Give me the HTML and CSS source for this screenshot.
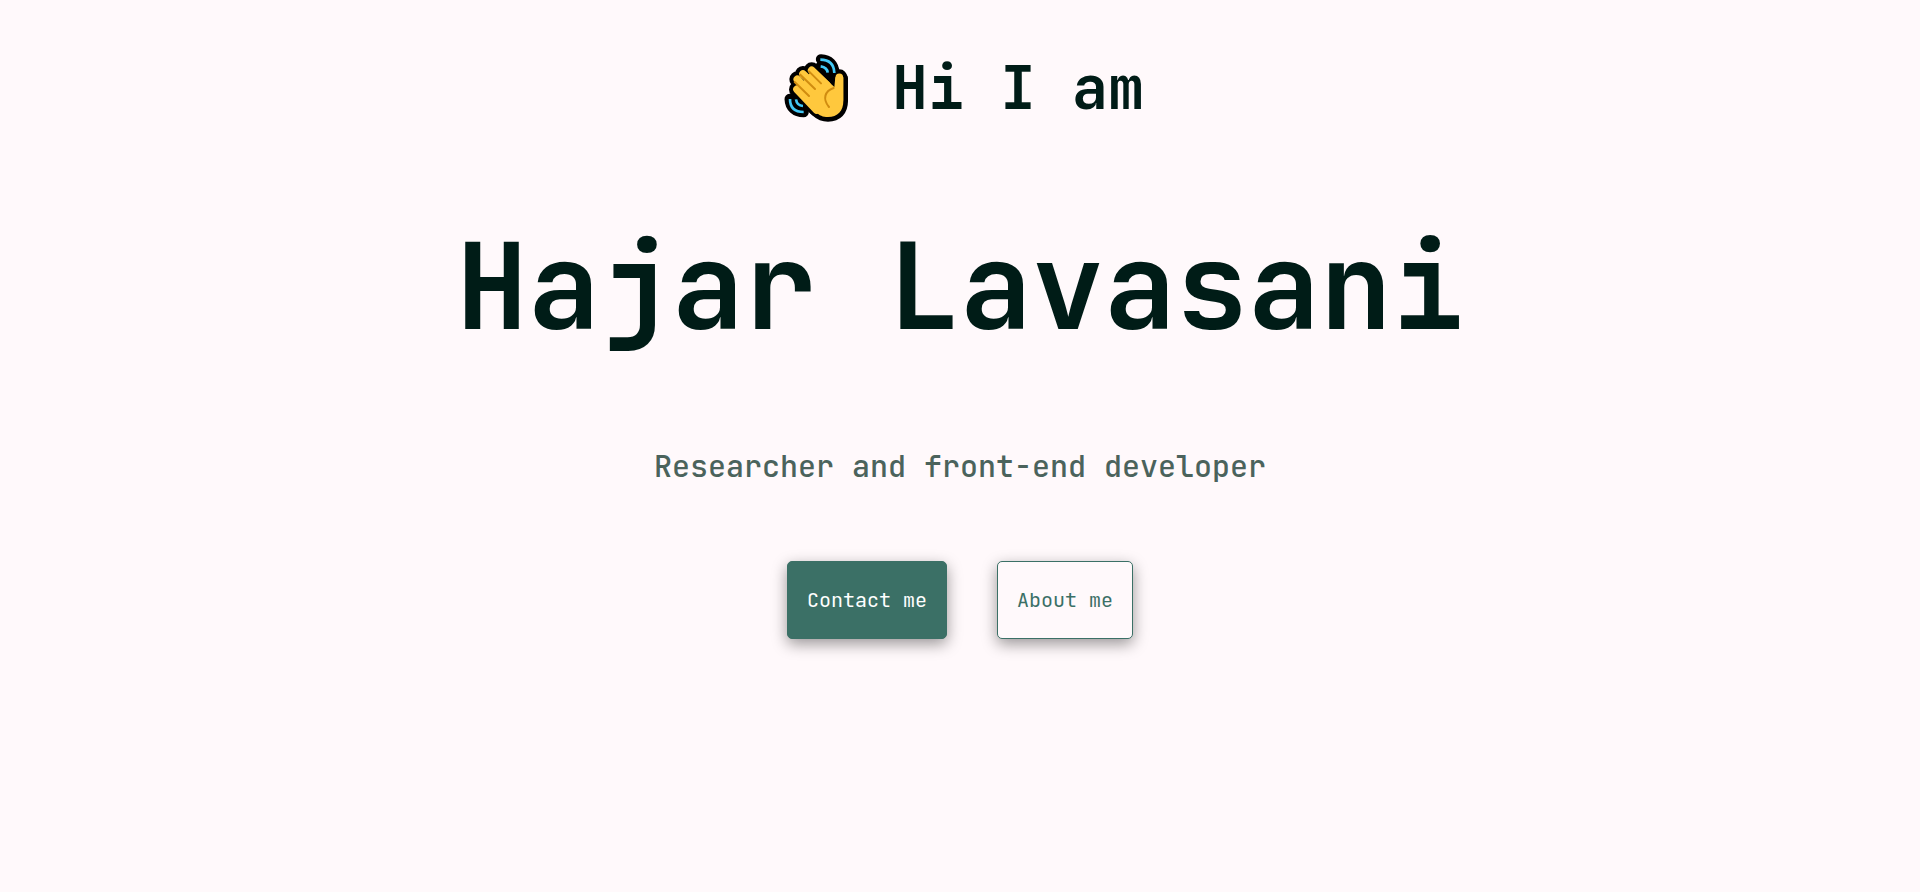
FILE: index.html
```html
<!DOCTYPE html>
<html lang="en">
<head>
<meta charset="utf-8">
<meta name="viewport" content="width=device-width, initial-scale=1">
<title>Hajar Lavasani</title>
<link rel="stylesheet" href="styles.css">
</head>
<body>
<main class="hero">
  <p class="greeting">
    <svg class="wave" viewBox="18 24 240 240" role="img" aria-label="Waving hand">
      <g fill="none" stroke="#000" stroke-linecap="round" stroke-linejoin="round">
        <path stroke-width="31" d="M153 58C177 59 192 74 193 98M59 177C60 202 76 216 101 216"/>
        <path stroke-width="30" d="M152 78L178 104M79 178L98 198"/>
        <path stroke-width="48" d="M125 91L165 131M99 102L150 150M82 118L130 170M81 148L140 206M208 112V185"/>
        <path stroke-width="28" fill="#000" d="M165 124L193 140L220 114V183C220 213 203 231 174 231C158 231 149 227 137 216L90 167Z"/>
      </g>
      <path fill="none" stroke="#42c8f5" stroke-width="8" d="M151 59C178 59 192 73 193 99M152 79C166 81 172 86 173 98M60 177C60 204 75 216 101 216M78 178C80 191 86 197 99 198"/>
      <g stroke="#ffc83d" stroke-linecap="round" stroke-linejoin="round" fill="none">
        <path stroke-width="23" d="M125 91L170 134M99 102L150 150M82 118L130 170M81 148L140 210M208 112V180"/>
        <path stroke="none" fill="#ffc83d" d="M132 84L193 141L196 112L220 112V183C220 213 203 231 174 231C158 231 149 227 137 216L74 156L91 135Z"/>
      </g>
      <g fill="none" stroke="#d08c10" stroke-width="6" stroke-linecap="round">
        <path d="M117 94L153 130M91 104L135 147M74 126L117 168"/>
        <path d="M191 144C164 153 157 177 177 201"/>
      </g>
    </svg>
    <span>Hi I am</span>
  </p>
  <h1 class="name">Hajar Lavasani</h1>
  <p class="role">Researcher and front-end developer</p>
  <div class="actions">
    <button class="button button-filled" type="button">Contact me</button>
    <button class="button button-outline" type="button">About me</button>
  </div>
</main>
</body>
</html>
```
FILE: styles.css
```css
* {
  box-sizing: border-box;
}

body {
  margin: 0;
  background: #fff9fb;
  color: #001c17;
  font-family: "JetBrains Mono", "DejaVu Sans Mono", monospace;
}

.hero {
  display: flex;
  flex-direction: column;
  align-items: center;
  padding: 48px 20px;
  text-align: center;
}

.greeting {
  display: flex;
  align-items: center;
  gap: 36px;
  margin: 0;
  font-size: 60px;
  font-weight: 700;
  line-height: 80px;
}

.wave {
  width: 80px;
  height: 80px;
}

.name {
  margin: 78px 0 80px;
  font-size: 120px;
  font-weight: 700;
  line-height: 160px;
}

.role {
  margin: 0;
  color: #4b635c;
  font-size: 30px;
  font-weight: 500;
  line-height: 40px;
}

.actions {
  display: flex;
  flex-wrap: wrap;
  justify-content: center;
  gap: 50px;
  margin-top: 75px;
}

.button {
  padding: 25px 19px;
  border: 1px solid #3b7066;
  border-radius: 5px;
  box-shadow: 0 5px 15px rgba(0, 0, 0, 0.4);
  font-family: inherit;
  font-size: 20px;
  line-height: 26px;
  cursor: pointer;
}

.button-filled {
  background: #3b7066;
  color: #fff;
}

.button-outline {
  background: #fff9fb;
  color: #3b7066;
}
```
